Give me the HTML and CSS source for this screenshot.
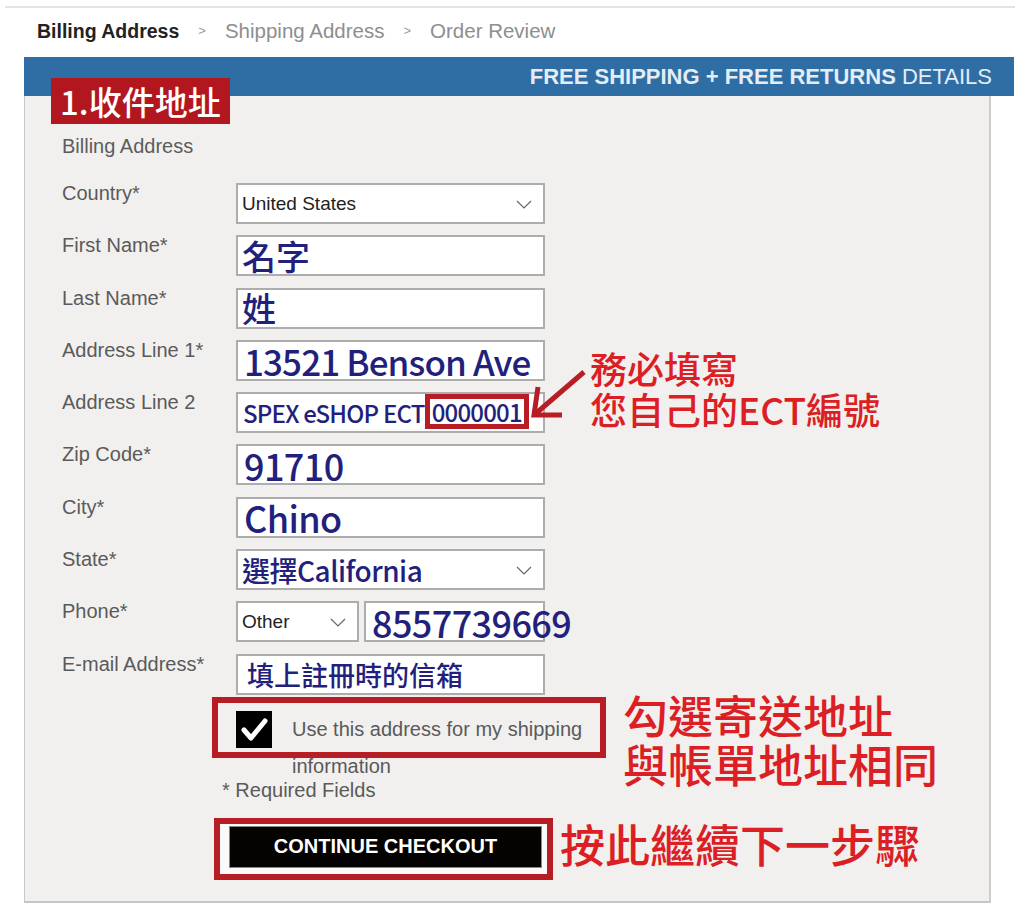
FILE: index.html
```html
<!DOCTYPE html>
<html lang="zh-Hant">
<head>
  <meta charset="UTF-8">
  <meta name="viewport" content="width=device-width, initial-scale=1.0">
  <title>Billing Address</title>
  <link rel="stylesheet" href="styles.css">
</head>
<body>

  <div class="topline"></div>

  <div class="crumbs">
    <span class="crumb active">Billing Address</span>
    <span class="sep">&gt;</span>
    <span class="crumb">Shipping Address</span>
    <span class="sep">&gt;</span>
    <span class="crumb">Order Review</span>
  </div>

  <div class="promo"><b>FREE SHIPPING + FREE RETURNS</b> DETAILS</div>

  <div class="panel">
    <div class="step-tag">1.收件地址</div>
    <div class="section-title">Billing Address</div>

    <div class="form-grid">
      <label>Country*</label>
      <div class="field select">
        <span class="plain">United States</span>
        <svg class="chev" width="16" height="9" viewBox="0 0 16 9"><polyline points="1,1 8,8 15,1" /></svg>
      </div>

      <label>First Name*</label>
      <div class="field"><span class="ink ink-l">名字</span></div>

      <label>Last Name*</label>
      <div class="field"><span class="ink ink-l">姓</span></div>

      <label>Address Line 1*</label>
      <div class="field"><span class="ink ink-xl ink-addr">13521 Benson Ave</span></div>

      <label>Address Line 2</label>
      <div class="field">
        <span class="ink ink-s">SPEX eSHOP ECT</span>
        <span class="ink ink-s ect-mark">0000001</span>
      </div>

      <label>Zip Code*</label>
      <div class="field"><span class="ink ink-xl">91710</span></div>

      <label>City*</label>
      <div class="field"><span class="ink ink-xl">Chino</span></div>

      <label>State*</label>
      <div class="field select">
        <span class="ink ink-m">選擇California</span>
        <svg class="chev" width="16" height="9" viewBox="0 0 16 9"><polyline points="1,1 8,8 15,1" /></svg>
      </div>

      <label>Phone*</label>
      <div class="phone">
        <div class="field select phone-type">
          <span class="plain">Other</span>
          <svg class="chev" width="16" height="9" viewBox="0 0 16 9"><polyline points="1,1 8,8 15,1" /></svg>
        </div>
        <div class="field phone-num"><span class="ink ink-xl">8557739669</span></div>
      </div>

      <label>E-mail Address*</label>
      <div class="field"><span class="ink ink-email">填上註冊時的信箱</span></div>
    </div>

    <div class="ship">
      <div class="checkbox">
        <svg width="36" height="37" viewBox="0 0 36 37"><polyline points="8,19 15,27 29,10" /></svg>
      </div>
      <div class="ship-text">Use this address for my shipping information</div>
      <div class="ship-mark"></div>
    </div>

    <div class="required">* Required Fields</div>

    <div class="continue-wrap">
      <button class="continue-btn">CONTINUE CHECKOUT</button>
    </div>

    <!-- annotations -->
    <svg class="arrow" width="65" height="60" viewBox="0 0 65 60">
      <polyline points="59,7 9,50" />
      <polyline points="37,50 9,50 13,22" />
    </svg>
    <div class="note note-ect">
      <div>務必填寫</div>
      <div>您自己的ECT編號</div>
    </div>
    <div class="note note-ship">
      <div>勾選寄送地址</div>
      <div>與帳單地址相同</div>
    </div>
    <div class="note note-next">按此繼續下一步驟</div>
  </div>

</body>
</html>
```

FILE: styles.css
```css
* {
  box-sizing: border-box;
}

body {
  margin: 0;
  background: #fff;
  font-family: "Liberation Sans", Arial, sans-serif;
}

.topline {
  height: 2px;
  margin: 6px 9px 0 5px;
  background: #e3e3e3;
}

/* breadcrumb */
.crumbs {
  display: flex;
  align-items: center;
  margin-top: 12px;
  padding-left: 37px;
  font-size: 20.5px;
  line-height: 22px;
  color: #8e8e8e;
}

.crumb.active {
  color: #222;
  font-weight: bold;
  font-size: 19.5px;
}

.sep {
  margin: 0 19px;
  font-size: 13px;
  color: #999;
}

.promo {
  width: 990px;
  height: 39px;
  margin: 15px 0 0 24px;
  padding-right: 22px;
  background: #2f6ea5;
  color: #e4ecf5;
  text-align: right;
  font-size: 22px;
  line-height: 39px;
}

/* main form panel */
.panel {
  position: relative;
  width: 967px;
  margin-left: 24px;
  padding: 39px 0 21px 37px;
  background: #f1f0ee;
  border-left: 1px solid #c8c8c8;
  border-right: 2px solid #cdcdcd;
  border-bottom: 2px solid #c6c6c6;
}

.panel::after {
  content: "";
  position: absolute;
  left: 2px;
  bottom: -8px;
  width: 200px;
  height: 5px;
  border-radius: 0 0 40% 60%;
  background: linear-gradient(to right, rgba(0, 0, 0, 0.8), rgba(0, 0, 0, 0.45) 45%, rgba(0, 0, 0, 0));
}

.step-tag {
  position: absolute;
  left: 26px;
  top: -18px;
  width: 179px;
  height: 46px;
  padding-left: 9px;
  background: #b2161f;
  color: #fff;
  font-family: "Noto Sans CJK TC", sans-serif;
  font-weight: 500;
  font-size: 33px;
  line-height: 46px;
  white-space: nowrap;
}

.section-title {
  margin-bottom: 26px;
  font-size: 20px;
  line-height: 22px;
  color: #5c5c5c;
}

.form-grid {
  display: grid;
  grid-template-columns: 174px 309px;
  grid-auto-rows: 41px;
  row-gap: 11.3px;
}

.form-grid label {
  font-size: 20px;
  line-height: 20px;
  color: #5a5a5a;
}

.field {
  position: relative;
  display: flex;
  align-items: center;
  padding-left: 4px;
  background: #fff;
  border: 2px solid #adadad;
  white-space: nowrap;
}

.plain {
  font-size: 19px;
  color: #222;
}

.chev {
  position: absolute;
  right: 11px;
  top: 50%;
  margin-top: -4px;
}

.chev polyline {
  fill: none;
  stroke: #666;
  stroke-width: 1.2;
}

.phone {
  display: flex;
  gap: 5px;
}

.phone-type {
  flex: none;
  width: 123px;
}

.phone-num {
  flex: 1;
  min-width: 0;
}

/* typed-in values */
.ink {
  font-family: "Noto Sans CJK TC", sans-serif;
  font-weight: 500;
  color: #231f7c;
  line-height: 1;
}

.ink-xl {
  font-size: 36px;
  padding-left: 2px;
  letter-spacing: -0.6px;
}

.ink-addr {
  font-size: 35px;
  letter-spacing: -0.9px;
}

.ink-l {
  font-size: 34px;
}

.ink-m {
  font-size: 28px;
  letter-spacing: -0.5px;
}

.ink-s {
  font-size: 24px;
  letter-spacing: -0.8px;
  padding-left: 1px;
}

.ink-email {
  font-size: 27px;
  padding-left: 5px;
}

.ect-mark {
  align-self: flex-start;
  display: flex;
  align-items: center;
  height: 35px;
  margin-left: 0;
  padding: 0 2px;
  border: 5px solid #b81c25;
}

/* shipping checkbox */
.ship {
  position: relative;
  display: flex;
  gap: 20px;
  width: 360px;
  margin: 16px 0 0 174px;
}

.checkbox {
  flex: none;
  width: 36px;
  height: 37px;
  background: #000;
}

.checkbox polyline {
  fill: none;
  stroke: #fff;
  stroke-width: 5;
  stroke-linecap: round;
  stroke-linejoin: round;
}

.ship-text {
  width: 300px;
  font-size: 20px;
  line-height: 37px;
  color: #5a5a5a;
}

.ship-mark {
  position: absolute;
  left: -24px;
  top: -14px;
  width: 394px;
  height: 61px;
  border: 6px solid #b81c25;
}

.required {
  margin: -6px 0 0 160px;
  font-size: 20px;
  line-height: 22px;
  color: #5a5a5a;
}

.continue-wrap {
  width: 339px;
  margin: 17px 0 0 152px;
  padding: 2px 5px 6px 9px;
  background: #fafafa;
  border: 6px solid #b81c25;
}

.continue-btn {
  display: block;
  width: 100%;
  height: 42px;
  background: #050202;
  color: #fff;
  border: 1px solid #888;
  font-family: "Liberation Sans", Arial, sans-serif;
  font-weight: bold;
  font-size: 20px;
}

/* red annotations */
.arrow {
  position: absolute;
  left: 500px;
  top: 269px;
}

.arrow polyline {
  fill: none;
  stroke: #b81c25;
  stroke-width: 5;
}

.note {
  position: absolute;
  color: #dc1e25;
  font-family: "Noto Sans CJK TC", sans-serif;
  font-weight: 500;
  white-space: nowrap;
}

.note-ect {
  left: 565px;
  top: 252px;
  font-size: 37px;
  line-height: 41px;
}

.note-ship {
  left: 598px;
  top: 594px;
  font-size: 45px;
  line-height: 49px;
}

.note-next {
  left: 535px;
  top: 723px;
  font-size: 45px;
  line-height: 50px;
}
```
